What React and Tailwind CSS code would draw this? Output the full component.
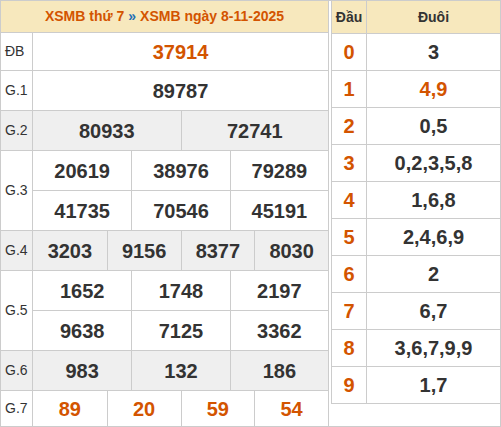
const rows = [
  { label: 'G.2', gray: true, lines: [['80933', '72741']] },
  { label: 'G.3', lines: [['20619', '38976', '79289'], ['41735', '70546', '45191']] },
  { label: 'G.4', gray: true, lines: [['3203', '9156', '8377', '8030']] },
  { label: 'G.5', lines: [['1652', '1748', '2197'], ['9638', '7125', '3362']] },
  { label: 'G.6', gray: true, lines: [['983', '132', '186']] },
]

const loto = [
  ['0', '3'],
  ['1', '4,9', true],
  ['2', '0,5'],
  ['3', '0,2,3,5,8'],
  ['4', '1,6,8'],
  ['5', '2,4,6,9'],
  ['6', '2'],
  ['7', '6,7'],
  ['8', '3,6,7,9,9'],
  ['9', '1,7'],
]

const cols = { 2: 'grid-cols-2', 3: 'grid-cols-3', 4: 'grid-cols-4' }

function Line({ nums, last }) {
  return (
    <div className={`grid ${cols[nums.length]} ${last ? 'h-[39px]' : 'h-[40px] border-b border-[#ccc]'}`}>
      {nums.map((n, i) => (
        <div
          key={i}
          className={`flex items-center justify-center text-[20px] font-bold text-[#333] ${i > 0 ? 'border-l border-[#ccc]' : ''}`}
        >
          {n}
        </div>
      ))}
    </div>
  )
}

function Label({ children }) {
  return (
    <div className="w-[32px] shrink-0 border-r border-[#ccc] flex items-center pl-[4px] text-[14px] text-[#333]">
      {children}
    </div>
  )
}

export default function App() {
  return (
    <div
      className="flex w-[501px] h-[427px] border border-[#ccc] bg-white"
      style={{ fontFamily: '"Liberation Sans", Arial, sans-serif' }}
    >
      {/* left: results */}
      <div className="w-[328px] shrink-0 border-r border-[#ccc] flex flex-col">
        <div className="h-[32px] border-b border-[#ccc] bg-[#f7e8bd] flex items-center justify-center text-[14px] font-bold text-[#d35400]">
          XSMB thứ 7 <span className="text-[#1f6fb5] mx-[4px]">»</span> XSMB ngày 8-11-2025
        </div>

        <div className="h-[38px] flex border-b border-[#ccc]">
          <Label>ĐB</Label>
          <div className="flex-1 flex items-center justify-center text-[20px] font-bold text-[#d35400]">37914</div>
        </div>

        <div className="h-[40px] flex border-b border-[#ccc]">
          <Label>G.1</Label>
          <div className="flex-1 flex items-center justify-center text-[20px] font-bold text-[#333]">89787</div>
        </div>

        {rows.map((r) => (
          <div key={r.label} className={`flex border-b border-[#ccc] ${r.gray ? 'bg-[#efefef]' : ''}`}>
            <Label>{r.label}</Label>
            <div className="flex-1 flex flex-col">
              {r.lines.map((l, i) => (
                <Line key={i} nums={l} last={i === r.lines.length - 1} />
              ))}
            </div>
          </div>
        ))}

        <div className="flex-1 flex">
          <Label>G.7</Label>
          <div className="flex-1 grid grid-cols-4">
            {['89', '20', '59', '54'].map((n, i) => (
              <div
                key={i}
                className={`flex items-center justify-center text-[20px] font-bold text-[#d35400] ${i > 0 ? 'border-l border-[#ccc]' : ''}`}
              >
                {n}
              </div>
            ))}
          </div>
        </div>
      </div>

      {/* right: loto dau/duoi */}
      <div className="ml-[2px] flex-1 self-start border-l border-[#ccc]">
        <div className="h-[33px] flex bg-[#f7e8bd] border-b border-[#ccc] text-[14px] font-bold text-[#333]">
          <div className="w-[35px] border-r border-[#ccc] flex items-center justify-center">Đầu</div>
          <div className="flex-1 flex items-center justify-center">Đuôi</div>
        </div>
        {loto.map(([d, t, hot]) => (
          <div key={d} className="h-[37px] flex border-b border-[#ccc] text-[20px] font-bold">
            <div className="w-[35px] border-r border-[#ccc] flex items-center justify-center text-[#d35400]">{d}</div>
            <div className={`flex-1 flex items-center justify-center ${hot ? 'text-[#d35400]' : 'text-[#333]'}`}>{t}</div>
          </div>
        ))}
      </div>
    </div>
  )
}
